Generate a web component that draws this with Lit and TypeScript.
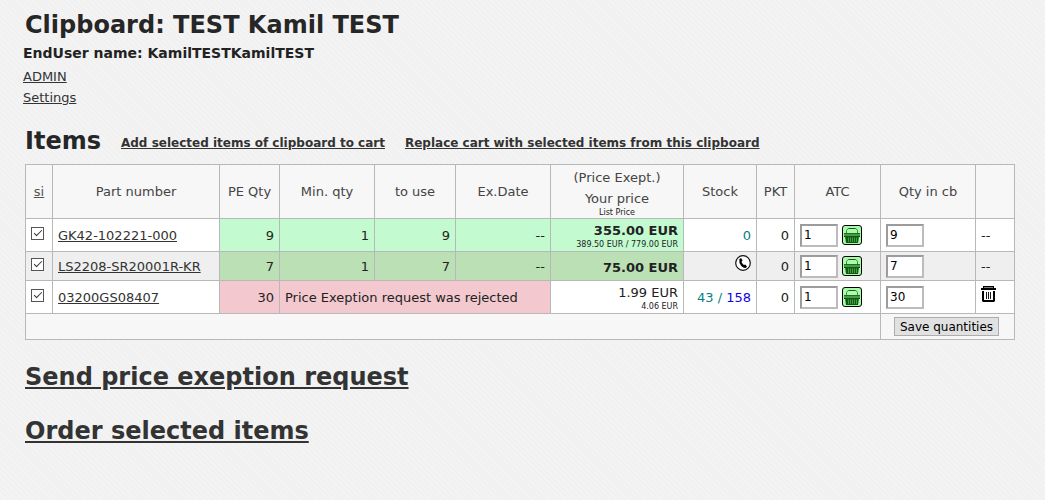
import { LitElement, html, css, svg, nothing } from "lit";
import { customElement, state } from "lit/decorators.js";

interface Item {
  part: string;
  peQty: number;
  minQty?: number;
  toUse?: number;
  exDate?: string;
  note?: string;
  tone: string;
  price: string;
  listPrice?: string;
  stock: number | null;
  incoming?: number;
  pkt: number;
  qty: number;
  removable?: boolean;
  selected: boolean;
}

const basketIcon = svg`
  <svg viewBox="0 0 20 20" width="20" height="20" aria-hidden="true">
    <rect x="0.5" y="0.5" width="19" height="19" rx="2.5" fill="#a9fba9" stroke="#000"/>
    <path d="M4.500 9V5.500L6 3.500H14L15.500 5.500V9" fill="none" stroke="#3f8a41"/>
    <path d="M7 3.500H13" stroke="#1d5a1f"/>
    <path d="M2 8H18V11H2Z" fill="#4a9a4c"/>
    <path d="M2 8.500H18" stroke="#226d24"/>
    <path d="M2 11.500H18" stroke="#064a08"/>
    <path d="M3 11H17L16 18H4Z" fill="#0f5c11"/>
    <path d="M6.500 12.500V17M8.500 12.500V17M10.500 12.500V17M12.500 12.500V17M14.500 12.500V17" stroke="#58ad59" stroke-width="0.800"/>
  </svg>`;

const phoneIcon = svg`
  <svg viewBox="0 0 16 16" width="16" height="16" role="img" aria-label="Call us">
    <circle cx="8" cy="8" r="7.300" fill="#fff" stroke="#111" stroke-width="1.200"/>
    <path d="M4.300 4.200L6 3.100L7.600 5.600L6.500 6.700Q7 8.600 8.900 10L10.200 9.400L12 11.500L10.700 12.900Q8.600 13.300 6.300 10.900Q3.700 8 4.300 4.200Z" fill="#000"/>
  </svg>`;

const binIcon = svg`
  <svg viewBox="0 0 16 17" width="16" height="17" aria-hidden="true">
    <path d="M2 0H13V2H12V1.500H3V2H2Z" fill="#000"/>
    <path d="M0 2H15V4H0Z" fill="#000"/>
    <path d="M1 5H3V14H12V5H14V15L13 16H2L1 15Z" fill="#000"/>
    <path d="M5.500 6V13M7.500 6V13M9.500 6V13" stroke="#000" stroke-width="0.900"/>
  </svg>`;

@customElement("app-root")
export class AppRoot extends LitElement {
  static styles = css`
    :host {
      display: block;
      box-sizing: border-box;
      min-height: 100vh;
      padding: 9px 30px 24px 25px;
      background:
        repeating-linear-gradient(45deg, #ffffff40 0 1px, #ffffff00 1px 4px),
        #f1f1f1;
      color: #333;
      font: 13px/21px "DejaVu Sans", Verdana, sans-serif;
    }
    a { color: #333; }
    h1, h2, p { margin: 0; }
    h1, h2 {
      color: #262626;
      font-size: 24px;
      line-height: 32px;
    }
    .enduser {
      color: #222;
      font-size: 14px;
      font-weight: bold;
      line-height: 25px;
    }
    .intro { margin-left: -2px; }
    .links { display: flex; flex-direction: column; align-items: flex-start; }
    .items {
      display: flex;
      align-items: flex-end;
      gap: 20px;
      margin: 17px 0 7px;
    }
    .items a { font-size: 12px; font-weight: bold; line-height: 28px; }
    table {
      width: 100%;
      border-collapse: collapse;
      table-layout: fixed;
      background: #f7f7f7;
    }
    th, td {
      box-sizing: border-box;
      border: 1px solid #b8b8b8;
      padding: 0 5px;
      white-space: nowrap;
      text-align: right;
      color: #222;
    }
    th { height: 54px; padding: 0; font-weight: normal; text-align: center; color: #444; }
    th a { color: #555; }
    small { display: block; font-size: 8px; line-height: 12px; color: #222; }
    th small { line-height: 8px; }
    .c-si { width: 27px; }
    .c-pe { width: 60px; }
    .c-min { width: 95px; }
    .c-use { width: 81px; }
    .c-date { width: 95px; }
    .c-price { width: 133px; }
    .c-stock { width: 73px; }
    .c-pkt { width: 38px; }
    .c-atc { width: 86px; }
    .c-qty { width: 95px; }
    .c-act { width: 39px; }
    tbody tr { height: 33px; background: #fff; }
    tbody tr:nth-child(even) { height: 29px; background: #efefef; }
    tfoot tr { height: 26px; }
    .left { text-align: left; }
    .tick { padding-bottom: 4px; }
    .green { background: #c3fad0; }
    .olive { background: #bbe0b5; }
    .pink { background: #f3c9cf; }
    .price { padding-top: 3px; line-height: 17px; }
    .stock { color: #078080; }
    .incoming { color: #1000e8; }
    svg { display: block; }
    .phone { display: flex; justify-content: flex-end; padding-bottom: 6px; }
    .bin { padding-bottom: 6px; }
    input[type="checkbox"] {
      appearance: none;
      display: grid;
      place-items: center;
      box-sizing: border-box;
      width: 13px;
      height: 13px;
      margin: 0;
      border: 1px solid #555;
      background: #fff;
    }
    input[type="checkbox"]:checked::before {
      content: "";
      width: 7px;
      height: 3px;
      border: solid #333;
      border-width: 0 0 1px 1px;
      transform: rotate(-45deg);
      margin-bottom: 3px;
    }
    input[type="text"] {
      display: block;
      box-sizing: border-box;
      width: 38px;
      height: 23px;
      margin: 0;
      padding: 0 0 0 2px;
      border: 2px solid;
      border-color: #9c9c9c #bcbcbc #bcbcbc #9c9c9c;
      background: #fff;
      color: #000;
      font: 12px "DejaVu Sans", Verdana, sans-serif;
    }
    .atc { display: flex; align-items: center; gap: 4px; }
    .icon-button { padding: 0; border: 0; background: none; display: block; cursor: pointer; }
    .icon-button.bin { padding-bottom: 5px; }
    .save {
      display: block;
      box-sizing: border-box;
      height: 19px;
      width: 105px;
      margin-left: 8px;
      padding: 0;
      border: 1px solid #adadad;
      background: #e1e1e1;
      color: #000;
      font: 12px "DejaVu Sans", Verdana, sans-serif;
    }
    .actions { display: grid; gap: 22px; margin-top: 21px; justify-items: start; }
  `;

  @state() private items: Item[] = [
    { part: "GK42-102221-000", peQty: 9, minQty: 1, toUse: 9, exDate: "--", tone: "green", price: "355.00 EUR", listPrice: "389.50 EUR / 779.00 EUR", stock: 0, pkt: 0, qty: 9, selected: true },
    { part: "LS2208-SR20001R-KR", peQty: 7, minQty: 1, toUse: 7, exDate: "--", tone: "olive", price: "75.00 EUR", stock: null, pkt: 0, qty: 7, selected: true },
    { part: "03200GS08407", peQty: 30, note: "Price Exeption request was rejected", tone: "pink", price: "1.99 EUR", listPrice: "4.06 EUR", stock: 43, incoming: 158, pkt: 0, qty: 30, removable: true, selected: true },
  ];

  private row(item: Item) {
    const priceTone = item.note ? "" : item.tone;
    return html`
      <tr>
        <td class="tick"><input type="checkbox" aria-label="Select ${item.part}" .checked=${item.selected}></td>
        <td class="left"><a href="#">${item.part}</a></td>
        <td class=${item.tone}>${item.peQty}</td>
        ${item.note
          ? html`<td class="left ${item.tone}" colspan="3">${item.note}</td>`
          : html`<td class=${item.tone}>${item.minQty}</td>
              <td class=${item.tone}>${item.toUse}</td>
              <td class=${item.tone}>${item.exDate}</td>`}
        <td class="price ${priceTone}">
          ${item.note ? item.price : html`<b>${item.price}</b>`}
          ${item.listPrice ? html`<small>${item.listPrice}</small>` : nothing}
        </td>
        <td class="stock">
          ${item.stock === null ? html`<span class="phone">${phoneIcon}</span>` : item.stock}${item.incoming
            ? html` / <span class="incoming">${item.incoming}</span>`
            : nothing}
        </td>
        <td>${item.pkt}</td>
        <td>
          <div class="atc">
            <input type="text" aria-label="Quantity to add, ${item.part}" value="1">
            <button class="icon-button" aria-label="Add ${item.part} to cart">${basketIcon}</button>
          </div>
        </td>
        <td><input type="text" aria-label="Quantity in clipboard, ${item.part}" value=${item.qty}></td>
        <td class="left">
          ${item.removable
            ? html`<button class="icon-button bin" aria-label="Remove ${item.part}">${binIcon}</button>`
            : "--"}
        </td>
      </tr>`;
  }

  render() {
    return html`
      <h1>Clipboard: TEST Kamil TEST</h1>
      <div class="intro">
        <p class="enduser">EndUser name: KamilTESTKamilTEST</p>
        <nav class="links"><a href="#">ADMIN</a><a href="#">Settings</a></nav>
      </div>
      <div class="items">
        <h2>Items</h2>
        <a href="#">Add selected items of clipboard to cart</a>
        <a href="#">Replace cart with selected items from this clipboard</a>
      </div>
      <table>
        <colgroup>
          <col class="c-si"><col><col class="c-pe"><col class="c-min"><col class="c-use"><col class="c-date">
          <col class="c-price"><col class="c-stock"><col class="c-pkt"><col class="c-atc"><col class="c-qty"><col class="c-act">
        </colgroup>
        <thead>
          <tr>
            <th><a href="#">si</a></th><th>Part number</th><th>PE Qty</th><th>Min. qty</th><th>to use</th><th>Ex.Date</th>
            <th>(Price Exept.)<br>Your price<small>List Price</small></th>
            <th>Stock</th><th>PKT</th><th>ATC</th><th>Qty in cb</th><th></th>
          </tr>
        </thead>
        <tbody>${this.items.map((item) => this.row(item))}</tbody>
        <tfoot>
          <tr><td colspan="10"></td><td colspan="2"><button class="save">Save quantities</button></td></tr>
        </tfoot>
      </table>
      <div class="actions">
        <h2><a href="#">Send price exeption request</a></h2>
        <h2><a href="#">Order selected items</a></h2>
      </div>
    `;
  }
}
